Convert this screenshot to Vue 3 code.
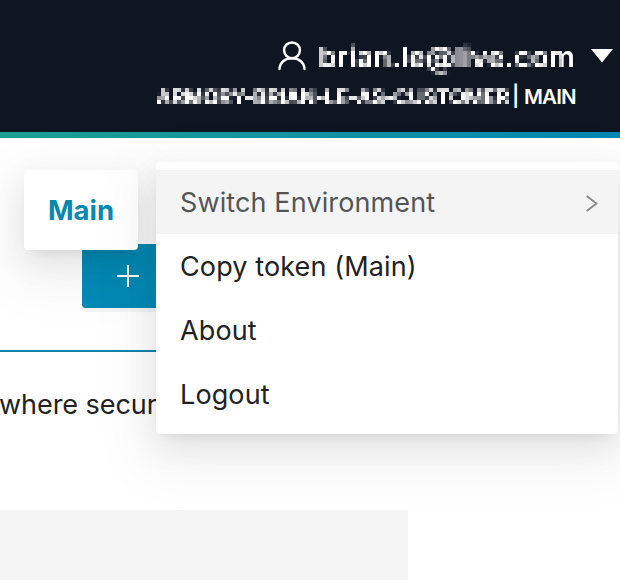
<script setup>
const items = ['Copy token (Main)', 'About', 'Logout']
</script>

<template>
  <div class="page">
    <svg class="defs" width="0" height="0" aria-hidden="true">
      <filter id="mosaic-email" filterUnits="userSpaceOnUse" primitiveUnits="userSpaceOnUse" x="0" y="0" width="270" height="40" color-interpolation-filters="sRGB">
        <feConvolveMatrix in="SourceGraphic" order="3" kernelMatrix="1 1 1 1 1 1 1 1 1" divisor="8" result="avg" />
        <feFlood x="2" y="2" width="1" height="1" flood-color="#fff" result="dot" />
        <feComposite in="dot" in2="dot" operator="over" x="0" y="0" width="4" height="4" result="cell" />
        <feTile in="cell" result="grid" />
        <feComposite in="avg" in2="grid" operator="in" result="samples" />
        <feConvolveMatrix in="samples" order="4" kernelMatrix="1 1 1 1 1 1 1 1 1 1 1 1 1 1 1 1" divisor="1" x="0" y="0" width="244" height="40" result="blocks" />
        <feOffset in="SourceGraphic" dx="0" dy="0" x="244" y="0" width="26" height="40" result="clear" />
        <feMerge><feMergeNode in="blocks" /><feMergeNode in="clear" /></feMerge>
      </filter>
      <filter id="mosaic-org" filterUnits="userSpaceOnUse" primitiveUnits="userSpaceOnUse" x="0" y="0" width="360" height="32" color-interpolation-filters="sRGB">
        <feConvolveMatrix in="SourceGraphic" order="3" kernelMatrix="1 1 1 1 1 1 1 1 1" divisor="7" result="avg" />
        <feFlood x="2" y="2" width="1" height="1" flood-color="#fff" result="dot" />
        <feComposite in="dot" in2="dot" operator="over" x="0" y="0" width="4" height="4" result="cell" />
        <feTile in="cell" result="grid" />
        <feComposite in="avg" in2="grid" operator="in" result="samples" />
        <feConvolveMatrix in="samples" order="4" kernelMatrix="1 1 1 1 1 1 1 1 1 1 1 1 1 1 1 1" divisor="1" />
      </filter>
    </svg>

    <header class="header">
      <div class="user">
        <svg class="avatar" width="28" height="30" viewBox="0 0 28 30" fill="none" stroke="#fff" stroke-width="2.5" stroke-linecap="round">
          <circle cx="14" cy="9.3" r="7.9" />
          <path d="M1.5 28C2 21 7.4 17.2 14 17.2S26 21 26.500 28" />
        </svg>
        <div class="email">brian.le@live.com</div>
        <svg class="caret" width="22" height="14" viewBox="0 0 22 14"><path d="M0 0H22L11 13.500Z" fill="#fff" /></svg>
      </div>
      <div class="org"><span class="name">ARMORY-BRIAN-LE-AS-CUSTOMER</span><span class="bar">|</span><span class="env">MAIN</span></div>
    </header>

    <main class="content">
      <div class="toolbar">
        <button class="add" aria-label="Add">
          <svg width="22" height="22" viewBox="0 0 22 22" stroke="#fff" stroke-width="2"><path d="M0 11H22M11 0V22" /></svg>
        </button>
      </div>
      <p class="text">where secure</p>
      <div class="panel"></div>
    </main>

    <div class="submenu">Main</div>
    <div class="menu">
      <div class="item active">
        <span>Switch Environment</span>
        <svg width="12" height="17" viewBox="0 0 12 17" fill="none" stroke="#858585" stroke-width="1.7"><path d="M.7 1L10.500 8.500L.7 16" /></svg>
      </div>
      <div v-for="item in items" :key="item" class="item"><span>{{ item }}</span></div>
    </div>
  </div>
</template>

<style>
body { margin: 0; overflow: hidden; }
</style>

<style scoped>
.page { position: relative; width: 620px; height: 580px; overflow: hidden; background: #fff; color: #222; font-family: Inter, "Liberation Sans", sans-serif; font-size: 27px; }
.page * { box-sizing: border-box; }
.defs { position: absolute; }
.header { height: 138px; padding-top: 38px; color: #fff; background: linear-gradient(90deg, #1f9f92, #0788b4) bottom / 100% 6px no-repeat #0f1621; }
.user { display: flex; height: 40px; padding-left: 278px; }
.avatar { margin-top: 3px; flex: none; }
.email { width: 270px; margin-left: 12px; flex: none; font-size: 29px; font-weight: 600; line-height: 38px; letter-spacing: 0.2px; white-space: nowrap; filter: url(#mosaic-email); }
.caret { flex: none; margin: 11px 0 0 3px; }
.org { display: flex; height: 32px; margin-top: 1px; padding-left: 156px; font-size: 20.500px; font-weight: 600; line-height: 35px; white-space: nowrap; }
.name { display: block; width: 356px; height: 32px; letter-spacing: -.22px; filter: url(#mosaic-org); }
.bar { width: 12px; font-weight: 600; line-height: 33px; }
.env { letter-spacing: -.8px; }
.toolbar { width: 618px; height: 214px; border-bottom: 2px solid #1283aa; padding: 106px 0 0 82px; }
.add { display: flex; align-items: center; width: 120px; height: 64px; padding: 0 0 0 35px; border: 0; border-radius: 4px; background: #008bb5; box-shadow: 0 4px 0 rgba(0, 0, 0, .045); }
.add svg { display: block; }
.text { margin: 31px 0 0 -1px; height: 44px; line-height: 44px; letter-spacing: -.05px; white-space: nowrap; }
.panel { width: 408px; height: 70px; margin-top: 83px; background: #f5f5f5; }
.submenu, .menu { position: absolute; border-radius: 4px; background: #fff; box-shadow: 0 6px 12px -8px rgba(0, 0, 0, .12), 0 12px 32px rgba(0, 0, 0, .08), 0 18px 56px 16px rgba(0, 0, 0, .05); }
.submenu { left: 24px; top: 170px; width: 114px; height: 80px; color: #0788b1; font-weight: 700; font-size: 27.500px; line-height: 81px; text-align: center; }
.menu { left: 156px; top: 162px; width: 462px; height: 272px; padding: 8px 0; }
.item { display: flex; align-items: center; justify-content: space-between; height: 64px; padding: 0 20px 0 24px; letter-spacing: .12px; white-space: nowrap; }
.active { background: #f4f4f4; color: #555; }
.active svg { position: relative; top: 1px; }
</style>
